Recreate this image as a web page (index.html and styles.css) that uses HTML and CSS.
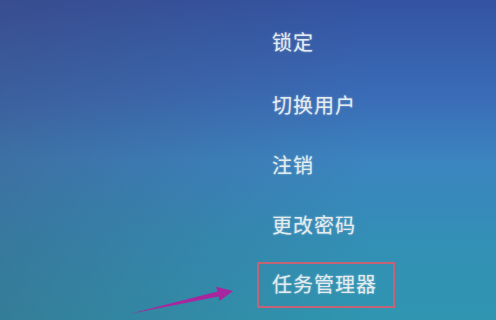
FILE: index.html
```html
<!DOCTYPE html>
<html lang="zh-CN">
<head>
<meta charset="utf-8">
<title>安全选项</title>
<link rel="stylesheet" href="styles.css">
</head>
<body>
<div class="screen">
  <ul class="menu">
    <li class="item item-first">锁定</li>
    <li class="item">切换用户</li>
    <li class="item">注销</li>
    <li class="item">更改密码</li>
    <li class="item item-marked">任务管理器</li>
  </ul>
  <svg class="arrow" width="496" height="320" viewBox="0 0 496 320" aria-hidden="true">
    <polygon points="129,314 217.5,291.6 216,286.8 233,291 219.5,301 218.5,296.4" fill="#a8269e"/>
  </svg>
</div>
</body>
</html>
```

FILE: styles.css
```css
html, body {
  margin: 0;
  padding: 0;
}

body {
  width: 496px;
  height: 320px;
  overflow: hidden;
}

.screen {
  position: relative;
  width: 496px;
  height: 320px;
  background:
    linear-gradient(to right, rgba(66, 62, 92, 0.28) 0%, rgba(66, 62, 92, 0.12) 40%, rgba(66, 62, 92, 0) 75%),
    linear-gradient(180deg, #3453a2 0%, #3a6cb6 30%, #3b84c0 50%, #338fb6 75%, #2f96b0 100%);
}

.menu {
  list-style: none;
  margin: 0;
  padding: 32px 0 0 272px;
  display: flex;
  flex-direction: column;
  align-items: flex-start;
  gap: 40px;
}

.item {
  font-family: "Noto Sans CJK SC", "Noto Sans", sans-serif;
  font-size: 20px;
  line-height: 20px;
  letter-spacing: 1px;
  color: #e4ecf0;
  text-shadow: 0 0 2px rgba(235, 245, 250, 0.55);
}

.item-first {
  margin-bottom: 3px;
}

.item-marked {
  margin: -13px 0 0 -15px;
  padding: 10px 16px 12px 13px;
  border: 2px solid #c46276;
}

.arrow {
  position: absolute;
  left: 0;
  top: 0;
}
```
